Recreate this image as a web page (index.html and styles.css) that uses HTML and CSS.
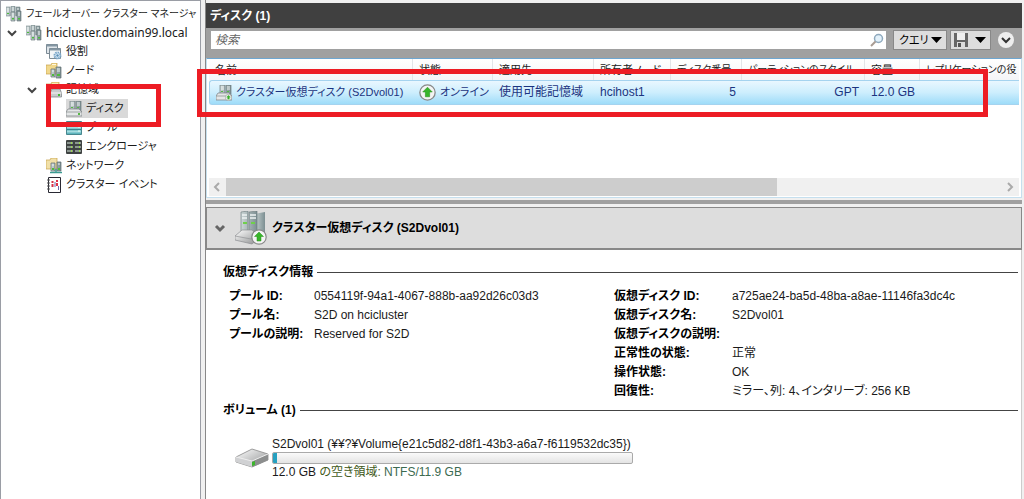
FILE: index.html
```
<!DOCTYPE html>
<html lang="ja">
<head>
    <meta charset="UTF-8">
    <title>フェールオーバー クラスター マネージャ</title>
    <link rel="stylesheet" href="styles.css">
</head>
<body>
    <svg class="defs" aria-hidden="true">
        <defs>
            <linearGradient id="metal" x1="0" x2="1">
                <stop offset="0" stop-color="#ccd6d6"/>
                <stop offset="1" stop-color="#7c8f92"/>
            </linearGradient>
            <linearGradient id="shell" x1="0" y1="0" x2="1" y2="1">
                <stop offset="0" stop-color="#ffffff"/>
                <stop offset="1" stop-color="#8d8f90"/>
            </linearGradient>
        </defs>
        <symbol id="i-cluster" viewBox="0 0 16 16">
            <path d="M0 1h4v9H0z M5 0h4v10H5z M10 1h4v9h-4z" fill="url(#metal)" stroke="#77888b" stroke-width=".6"/>
            <path d="M1 3h2M1 5h2M6 2h2M6 4h2M11 3h2" stroke="#f4f8f8"/>
            <path d="M5 6h4v9H5z M11 5h4v10h-4z" fill="url(#metal)" stroke="#5b6b6e" stroke-width=".6"/>
            <path d="M6 8h2M12 7h2M6 10h2M12 9h2" stroke="#f4f8f8"/>
            <path d="M1 7h2v1H1z M6 12h2v1.500H6z M12 12h2v1.500h-2z" fill="#4bbd3c"/>
        </symbol>
        <symbol id="i-roles" viewBox="0 0 16 16">
            <path d="M.5.500h11v9H.500z" fill="#dfe5ea" stroke="#7b8a94"/>
            <path d="M.5 1.500h11" stroke="#8496a3" stroke-width="2"/>
            <path d="M3.500 4.500h11v10h-11z" fill="#f2f5f7" stroke="#7b8a94"/>
            <path d="M3.500 5.500h11" stroke="#8496a3" stroke-width="2"/>
            <circle cx="11.500" cy="11.500" r="3" fill="#dcebf6" stroke="#78a5c8" stroke-width="2" stroke-dasharray="1.500 .8"/>
            <circle cx="11.500" cy="11.500" r="1.200" fill="#5a8fb8"/>
        </symbol>
        <symbol id="i-folder-node" viewBox="0 0 16 16">
            <path d="M0 2h5l1-2h5v11H0z" fill="#f1d88c" stroke="#c5a04c" stroke-width=".7"/>
            <path d="M6 1.500h4" stroke="#fff8df"/>
            <path d="M5 6h4v8H5z M10 4h5v11h-5z" fill="url(#metal)" stroke="#5b6b6d" stroke-width=".7"/>
            <path d="M6 8h2M11 6h3M11 8h3" stroke="#edf3f3"/>
            <path d="M6 11h2v2H6z M11 11h3v2h-3z" fill="#4fbc3b"/>
        </symbol>
        <symbol id="i-storage" viewBox="0 0 16 16">
            <path d="M0 2h5l1-2h7v11H0z" fill="#f1d88c" stroke="#c5a04c" stroke-width=".7"/>
            <path d="M6 2h6" stroke="#fff8df"/>
            <path d="M5 9l1-2h8l1.500 4v4H4v-4z" fill="#c9cccd" stroke="#777d80" stroke-width=".7"/>
            <path d="M4 11h11.500" stroke="#f5f5f5"/>
            <path d="M12 12h2v2h-2z" fill="#43b935"/>
        </symbol>
        <symbol id="i-disk" viewBox="0 0 16 16">
            <path d="M4 0h5v9H4z M10 0h5v12h-5z" fill="url(#metal)" stroke="#6c7a7c" stroke-width=".7"/>
            <path d="M5 2h3M5 4h3M11 2h3M11 4h3" stroke="#f0f4f4"/>
            <path d="M0 11l2-3h11l3 3v4H0z" fill="#e4e6e7" stroke="#777d80" stroke-width=".7"/>
            <path d="M0 11h16" stroke="#84898b" stroke-width=".7"/>
            <path d="M12 12h2v2h-2z M11 6h2v1h-2z M5 6h2v1H5z" fill="#57b944"/>
        </symbol>
        <symbol id="i-pool" viewBox="0 0 16 16">
            <path d="M.5 1.500h15v13H.500z" fill="#5eb5bd" stroke="#48878e"/>
            <path d="M1 3.500h14M1 7.500h14M1 11.500h14" stroke="#a6dce0" stroke-width="2"/>
            <path d="M1 5.500h14M1 9.500h14" stroke="#39858e"/>
            <path d="M12 3h2M12 7h2M12 11h2" stroke="#e8fff4"/>
        </symbol>
        <symbol id="i-enclosure" viewBox="0 0 16 16">
            <rect y="1" width="16" height="14" rx="1" fill="#3f4342"/>
            <path d="M1 4h6M9 4h6M1 8h6M9 8h6M1 12h6M9 12h6" stroke="#8c9690" stroke-width="2"/>
            <path d="M5 4h1M13 4h1M5 8h1M13 8h1M5 12h1M13 12h1" stroke="#9bdc4c" stroke-width="2"/>
        </symbol>
        <symbol id="i-network" viewBox="0 0 16 16">
            <path d="M0 2h4l1-2h6v11H0z" fill="#f1e0a8" stroke="#c5a04c" stroke-width=".7"/>
            <path d="M5 5h4v8H5z M11 4h4v9h-4z" fill="url(#metal)" stroke="#5b6b6d" stroke-width=".7"/>
            <path d="M6 7h2M12 6h2" stroke="#edf3f3"/>
            <path d="M6 10h2v2H6z M12 10h2v2h-2z" fill="#4fbc3b"/>
            <path d="M4 14.500h12M10 11v4" stroke="#3c9b93" stroke-width="1.500"/>
        </symbol>
        <symbol id="i-events" viewBox="0 0 16 16">
            <path d="M2.500.500h12v15h-12z" fill="#fff" stroke="#292933"/>
            <path d="M1 3h3M1 6h3M1 9h3M1 12h3" stroke="#555"/>
            <path d="M6.500 4v2M6.500 7v3" stroke="#d63049" stroke-width="2"/>
            <path d="M11 3v2M11 6v3" stroke="#e0304a" stroke-width="2"/>
            <path d="M9 5v5M12.500 9v4" stroke="#7468ad"/>
        </symbol>
        <symbol id="i-up" viewBox="0 0 16 16">
            <circle cx="8" cy="8" r="7.200" fill="#f4f4f4" stroke="#888" stroke-width="1.200"/>
            <path d="M8 3l4.500 4.500H10V12H6V7.500H3.500z" fill="#38b52a" stroke="#249018" stroke-width=".5"/>
        </symbol>
        <symbol id="i-chevron" viewBox="0 0 12 12">
            <path d="M2 4l4 4 4-4" fill="none" stroke="currentColor" stroke-width="2"/>
        </symbol>
        <symbol id="i-caret" viewBox="0 0 12 6">
            <path d="M0 0h11L5.500 6z" fill="#000"/>
        </symbol>
    </svg>

    <div class="page">
        <nav class="tree">
            <div class="node small"><svg class="icon"><use href="#i-cluster"/></svg>フェールオーバー クラスター マネージャ</div>
            <ul>
                <li>
                    <div class="node">
                        <button class="toggle" aria-label="折りたたむ"><svg><use href="#i-chevron"/></svg></button>
                        <svg class="icon"><use href="#i-cluster"/></svg><span class="host">hcicluster.domain99.local</span>
                    </div>
                    <ul class="sub">
                        <li class="node leaf"><svg class="icon"><use href="#i-roles"/></svg>役割</li>
                        <li class="node leaf"><svg class="icon"><use href="#i-folder-node"/></svg>ノード</li>
                        <li>
                            <div class="node">
                                <button class="toggle" aria-label="折りたたむ"><svg><use href="#i-chevron"/></svg></button>
                                <svg class="icon"><use href="#i-storage"/></svg>記憶域
                            </div>
                            <ul class="sub">
                                <li class="node leaf"><span class="selected"><svg class="icon"><use href="#i-disk"/></svg>ディスク</span></li>
                                <li class="node leaf"><svg class="icon"><use href="#i-pool"/></svg>プール</li>
                                <li class="node leaf"><svg class="icon"><use href="#i-enclosure"/></svg>エンクロージャ</li>
                            </ul>
                        </li>
                        <li class="node leaf"><svg class="icon"><use href="#i-network"/></svg>ネットワーク</li>
                        <li class="node leaf"><svg class="icon"><use href="#i-events"/></svg>クラスター イベント</li>
                    </ul>
                </li>
            </ul>
        </nav>

        <main class="main">
            <h1 class="title">ディスク (1)</h1>
            <div class="toolbar">
                <div class="search">
                    <input type="search" placeholder="検索" aria-label="検索">
                    <svg viewBox="0 0 14 14">
                        <circle cx="8.500" cy="5.500" r="4" fill="#e3f1fa" stroke="#8fa9bd" stroke-width="1.500"/>
                        <path d="M5.500 8.500L1 13" stroke="#a99c93" stroke-width="2"/>
                    </svg>
                </div>
                <div class="tools">
                    <button class="tool">クエリ <svg class="caret"><use href="#i-caret"/></svg></button>
                    <button class="tool save" aria-label="保存">
                        <svg class="icon" viewBox="0 0 16 16">
                            <path d="M1 1h14v14H1z" fill="#666"/>
                            <path d="M4 1h8v7H4z" fill="#eee"/>
                            <path d="M4 10h8v5H4z" fill="#ddd"/>
                            <path d="M5 11h3v4H5z" fill="#555"/>
                        </svg>
                        <svg class="caret"><use href="#i-caret"/></svg>
                    </button>
                </div>
                <button class="expand" aria-label="展開"><svg><use href="#i-chevron"/></svg></button>
            </div>

            <section class="list">
                <table class="disks">
                    <colgroup>
                        <col class="c-name"><col class="c-state"><col class="c-assign"><col class="c-owner">
                        <col class="c-number"><col class="c-style"><col class="c-size"><col>
                    </colgroup>
                    <thead>
                        <tr>
                            <th>名前</th><th>状態</th><th>適用先</th><th>所有者ノード</th>
                            <th class="small">ディスク番号</th><th class="small">パーティションのスタイル</th><th>容量</th><th class="small">レプリケーションの役</th>
                        </tr>
                    </thead>
                    <tbody>
                        <tr>
                            <td><span class="cell"><svg class="icon" viewBox="0 0 16 16"><use href="#i-disk"/><use href="#i-up" x="9" y="9" width="7" height="7"/></svg>クラスター仮想ディスク (S2Dvol01)</span></td>
                            <td><span class="cell"><svg class="icon online"><use href="#i-up"/></svg>オンライン</span></td>
                            <td>使用可能記憶域</td>
                            <td>hcihost1</td>
                            <td class="num">5</td>
                            <td class="num">GPT</td>
                            <td>12.0 GB</td>
                            <td></td>
                        </tr>
                    </tbody>
                </table>
                <div class="scrollbar">
                    <button class="arrow left" aria-label="左へ"><svg><use href="#i-chevron"/></svg></button>
                    <div class="track"><div class="thumb"></div></div>
                    <button class="arrow right" aria-label="右へ"><svg><use href="#i-chevron"/></svg></button>
                </div>
            </section>

            <section class="detail">
                <header class="detail-head">
                    <button class="toggle" aria-label="折りたたむ"><svg viewBox="0 0 12 12"><path d="M2 4l4 4 4-4" fill="none" stroke="currentColor" stroke-width="3"/></svg></button>
                    <svg class="big" viewBox="0 0 32 34">
                        <path d="M19 3l11-2v26H19z" fill="url(#metal)"/>
                        <path d="M6 1l7-1v24H6z M14 1l8-1v26h-8z" fill="url(#metal)" stroke="#667678" stroke-width=".6"/>
                        <path d="M7 4h5M7 7h5M15 4h6M15 7h6" stroke="#eef3f3" stroke-width="1.500"/>
                        <path d="M8 12h4M16 12h4" stroke="#6fd04a" stroke-width="2"/>
                        <path d="M0 25l7-6h10l6 5v4l-6 5L0 29z" fill="url(#shell)" stroke="#8b8d90" stroke-width=".7"/>
                        <path d="M0 25l16 3 7-4" fill="none" stroke="#909295" stroke-width=".7"/>
                        <use href="#i-up" x="16" y="18" width="16" height="16"/>
                    </svg>
                    <h2>クラスター仮想ディスク (S2Dvol01)</h2>
                </header>

                <div class="detail-body">
                    <h3 class="section">仮想ディスク情報</h3>
                    <div class="info">
                        <dl class="pool">
                            <dt>プール ID:</dt><dd>0554119f-94a1-4067-888b-aa92d26c03d3</dd>
                            <dt>プール名:</dt><dd>S2D on hcicluster</dd>
                            <dt>プールの説明:</dt><dd>Reserved for S2D</dd>
                        </dl>
                        <dl class="vdisk">
                            <dt>仮想ディスク ID:</dt><dd>a725ae24-ba5d-48ba-a8ae-11146fa3dc4c</dd>
                            <dt>仮想ディスク名:</dt><dd>S2Dvol01</dd>
                            <dt>仮想ディスクの説明:</dt><dd></dd>
                            <dt>正常性の状態:</dt><dd>正常</dd>
                            <dt>操作状態:</dt><dd>OK</dd>
                            <dt>回復性:</dt><dd>ミラー、列: 4、インタリーブ: 256 KB</dd>
                        </dl>
                    </div>

                    <h3 class="section">ボリューム (1)</h3>
                    <div class="volume">
                        <svg class="drive" viewBox="0 0 34 20">
                            <path d="M1 9L17 1l16 5v6l-16 7L1 14z" fill="url(#shell)" stroke="#888" stroke-width=".8"/>
                            <path d="M17 13v6l16-7V6z" fill="#8c8e8e"/>
                            <path d="M1 9l16 4v6L1 14z" fill="#d0d1d3"/>
                            <path d="M1 9l16 4 16-7" fill="none" stroke="#eee"/>
                            <path d="M17 14l3-1v4l-3 1z" fill="#3bb52c"/>
                        </svg>
                        <div class="volume-text">
                            <div>S2Dvol01 (¥¥?¥Volume{e21c5d82-d8f1-43b3-a6a7-f6119532dc35})</div>
                            <div class="bar"><div class="used" style="width: 1%"></div></div>
                            <div>12.0 GB <span class="free">の空き領域:</span> <span class="fs">NTFS/11.9 GB</span></div>
                        </div>
                    </div>
                </div>
            </section>
        </main>

        <div class="mark mark-tree"></div>
        <div class="mark mark-row"></div>
    </div>
</body>
</html>
```
FILE: styles.css
```
* {
    margin: 0;
    padding: 0;
    box-sizing: border-box;
}
body {
    background: #f0f0f0;
    color: #1a1a1a;
    font: 12px/19px "Liberation Sans", "Noto Sans CJK JP", sans-serif;
    font-feature-settings: "palt";
}
ul {
    list-style: none;
}
button {
    border: 0;
    background: none;
    color: inherit;
    font: inherit;
}
svg {
    display: block;
    flex: none;
    width: 12px;
    height: 12px;
}
.defs {
    position: absolute;
    width: 0;
    height: 0;
}
.icon {
    width: 16px;
    height: 16px;
}
.page {
    position: relative;
    display: grid;
    grid-template-columns: 201px minmax(0, 1fr);
    gap: 4px;
    min-height: 100vh;
}

/* tree */
.tree {
    padding: 3px 0 0 5px;
    background: #fff;
    border: 1px solid #9a9da5;
    border-width: 1px 1px 0;
    font-size: 11px;
    white-space: nowrap;
}
.tree .small {
    font-size: 10px;
}
.node {
    display: flex;
    align-items: center;
    gap: 4px;
    height: 19px;
}
.toggle {
    display: flex;
    align-items: center;
    width: 16px;
    height: 16px;
    color: #444;
}
.sub {
    padding-left: 20px;
}
.leaf {
    padding-left: 20px;
}
.host {
    font-family: "Noto Sans", sans-serif;
    font-size: 12px;
    line-height: 17px;
}
.selected {
    display: flex;
    align-items: center;
    gap: 4px;
    padding-right: 4px;
    background: #d9d9d9;
}

/* list pane */
.main {
    display: flex;
    flex-direction: column;
    padding: 3px 2px 0 0;
    border-left: 1px solid #888;
}
.title {
    height: 25px;
    padding-left: 4px;
    background: #404040;
    color: #fff;
    font-size: 12px;
    font-weight: bold;
    line-height: 27px;
}
.toolbar {
    display: flex;
    align-items: center;
    gap: 7px;
    height: 30px;
    padding: 0 8px 6px 5px;
    background: #a0a0a0;
}
.search {
    display: flex;
    flex: 1;
    align-items: center;
    height: 18px;
    padding: 0 2px 0 4px;
    background: #fff;
}
.search input {
    flex: 1;
    min-width: 0;
    border: 0;
    outline: 0;
    background: none;
    font: italic 12px/18px "Liberation Sans", "Noto Sans CJK JP", sans-serif;
}
.search input::placeholder {
    color: #666;
}
.search svg {
    width: 14px;
    height: 14px;
}
.tools {
    display: flex;
    gap: 3px;
}
.tool {
    display: flex;
    align-items: center;
    justify-content: space-between;
    width: 54px;
    height: 20px;
    padding: 0 3px 0 5px;
    border: 1px solid #888;
    background: #ddd;
    color: #000;
    font-size: 11px;
    line-height: 18px;
    white-space: nowrap;
}
.save {
    width: 41px;
    padding: 0 3px 0 2px;
}
.caret {
    width: 12px;
    height: 6px;
}
.expand {
    width: 16px;
    height: 16px;
    padding: 2px;
    border-radius: 50%;
    background: #eee;
    color: #333;
}
.list {
    display: flex;
    flex-direction: column;
    justify-content: space-between;
    height: 140px;
    padding: 0 2px 1px;
    background: #fff;
    border: 1px solid #c5dfee;
    border-top-color: #6ea6d0;
}
.disks {
    width: 100%;
    table-layout: fixed;
    border-collapse: separate;
    border-spacing: 0;
    white-space: nowrap;
}
.c-name { width: 204px; }
.c-state { width: 80px; }
.c-assign { width: 101px; }
.c-owner { width: 77px; }
.c-number { width: 71px; }
.c-style { width: 123px; }
.c-size { width: 55px; }
.disks th {
    height: 21px;
    padding-left: 6px;
    border-right: 1px solid #e2e5e8;
    background: linear-gradient(#fff, #f4f5f7);
    color: #222;
    font-size: 11px;
    font-weight: normal;
    line-height: 20px;
    text-align: left;
}
.disks th:last-child {
    border-right: 0;
}
.disks .small {
    font-size: 10px;
}
.disks td {
    height: 25px;
    padding: 0 6px;
    border: 1px solid #a5d3ef;
    border-width: 1px 0;
    background: linear-gradient(#e9f7ff, #cdeefd 50%, #9edcf9);
    color: #1c3480;
}
.disks td:first-child {
    border-left-width: 1px;
    border-radius: 3px 0 0 3px;
}
.disks .num {
    text-align: right;
}
.cell {
    display: flex;
    align-items: center;
    gap: 4px;
    font-size: 11px;
}
.online {
    width: 17px;
    height: 17px;
}
.scrollbar {
    display: flex;
    height: 18px;
    background: #f0f0f0;
}
.arrow {
    width: 17px;
    padding-left: 2px;
    color: #aaa;
}
.left svg {
    transform: rotate(90deg);
}
.right svg {
    transform: rotate(-90deg);
}
.track {
    flex: 1;
}
.thumb {
    width: 71%;
    height: 100%;
    background: #cdcdcd;
}

/* detail pane */
.detail {
    display: flex;
    flex: 1;
    flex-direction: column;
    margin-top: 2px;
    padding-top: 3px;
    border-top: 4px solid #a0a0a0;
}
.detail-head {
    display: flex;
    align-items: center;
    gap: 5px;
    height: 43px;
    padding-left: 7px;
    border: 1px solid #888;
    border-bottom-width: 2px;
    background: #ddd;
}
.detail-head .toggle {
    color: #666;
}
.big {
    width: 32px;
    height: 34px;
}
.detail-head h2 {
    color: #000;
    font-size: 12px;
}
.detail-body {
    flex: 1;
    padding: 13px 3px 0 17px;
    border-right: 1px solid #ccc;
    background: #fff;
}
.section {
    display: flex;
    align-items: center;
    gap: 4px;
    color: #000;
    font-size: 12px;
}
.section::after {
    content: "";
    flex: 1;
    height: 1px;
    background: #444;
}
.info {
    display: grid;
    grid-template-columns: 385px minmax(0, 1fr);
    padding: 5px 0 0 6px;
}
.info dl {
    display: grid;
    grid-auto-rows: 19px;
    align-content: start;
    white-space: nowrap;
}
.pool {
    grid-template-columns: 85px 1fr;
}
.vdisk {
    grid-template-columns: 118px 1fr;
}
.info dt {
    color: #000;
    font-weight: bold;
}
.volume {
    display: flex;
    align-items: center;
    gap: 3px;
    padding: 16px 0 0 12px;
}
.drive {
    width: 34px;
    height: 20px;
}
.volume-text {
    width: 361px;
    white-space: nowrap;
    line-height: 16px;
}
.bar {
    height: 12px;
    border: 1px solid #aaa;
    border-radius: 2px;
    background: linear-gradient(#fafafa, #e4e4e4);
    overflow: hidden;
}
.used {
    height: 100%;
    background: #26a0c0;
}
.free {
    color: #3f5a20;
}
.fs {
    color: #3c6a50;
}

/* red frames over the panes */
.mark {
    position: absolute;
    border: 5px solid #ed1c24;
}
.mark-tree {
    left: 46px;
    top: 84px;
    width: 115px;
    height: 43px;
}
.mark-row {
    left: 197px;
    right: 36px;
    top: 69px;
    height: 48px;
}
```
